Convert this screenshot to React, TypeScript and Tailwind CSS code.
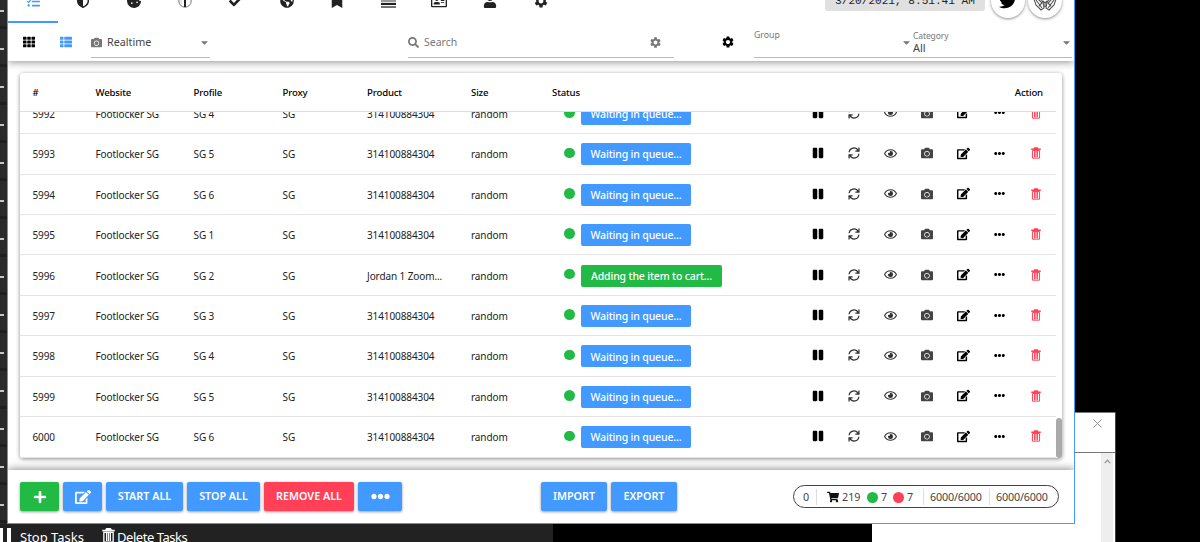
import type { ReactNode } from "react";
import {
  FaBookmark, FaCamera, FaCaretDown, FaCheck, FaCookieBite, FaEdit, FaEllipsisH,
  FaPause, FaPlus, FaRegEye, FaSearch, FaShoppingCart, FaTasks, FaTh, FaThList, FaTwitter, FaUser, FaGlobeAmericas,
  FaRegAddressCard,
} from "react-icons/fa";
import { MdSettings } from "react-icons/md";

const rows = [
  ["5992", "SG 4"], ["5993", "SG 5"], ["5994", "SG 6"], ["5995", "SG 1"], ["5996", "SG 2"],
  ["5997", "SG 3"], ["5998", "SG 4"], ["5999", "SG 5"], ["6000", "SG 6"],
];

const columns =
  "grid grid-cols-[63px_98px_89px_84.5px_104px_81px_1fr] items-center pl-[12.5px] w-[1036px] whitespace-nowrap";

function Trash({ className = "" }: { className?: string }) {
  return (
    <svg viewBox="0 0 14 16" className={className} fill="none" stroke="currentColor">
      <path d="M0.3 2.8H13.7M4.3 2.2L5.2 .8H8.8L9.7 2.2" strokeWidth="2" />
      <path d="M2 4.6V15.2H12V4.6ZM5 5V14M7 5V14M9 5V14" strokeWidth="1.4" />
    </svg>
  );
}

function Sync() {
  return (
    <svg viewBox="0 0 16 16" className="size-[12px] text-[#333]" fill="none" stroke="currentColor" strokeWidth="1.7">
      <path d="M1.5 7A6.3 6.3 0 0 1 13.5 5M14.6 .8V5.6H9.8M14.5 9A6.3 6.3 0 0 1 2.5 11M1.4 15.2V10.4H6.2" />
    </svg>
  );
}

function Row({ id, profile }: { id: string; profile: string }) {
  const carting = id === "5996";
  return (
    <div className={`${columns} h-[40.43px] shrink-0 border-b border-[#e4e4e4] pt-[2px] text-[10px] tracking-[-0.1px] text-[#222]`}>
      <span>{id}</span>
      <span>Footlocker SG</span>
      <span>{profile}</span>
      <span>SG</span>
      <span>{carting ? "Jordan 1 Zoom..." : "314100884304"}</span>
      <span>random</span>
      <div className="flex items-center pb-px pl-3">
        <span className="mb-[3px] mr-[6.5px] size-[10.5px] rounded-full bg-[#21ba45]" />
        <span className={`flex h-[22px] items-center justify-center rounded-[2px] pt-[2px] text-[10.5px] font-medium tracking-[-0.15px] text-white ${carting ? "w-[141px] bg-[#21ba45]" : "w-[110px] bg-[#4299ff]"}`}>
          {carting ? "Adding the item to cart..." : "Waiting in queue..."}
        </span>
        <div className="mb-[2px] ml-auto mr-[2px] grid grid-cols-[repeat(7,36.3px)] place-items-center text-black">
          <FaPause className="size-[12px]" />
          <Sync />
          <FaRegEye className="size-[13px] text-[#333]" />
          <FaCamera className="size-[12px] text-[#444]" />
          <FaEdit className="size-[13px]" />
          <FaEllipsisH className="size-[11px]" />
          <Trash className="h-[12px] w-[10px] text-[#ff4057]" />
        </div>
      </div>
    </div>
  );
}

function Tab({ active, children }: { active?: boolean; children: ReactNode }) {
  return (
    <div className={`flex h-[46px] items-center justify-center border-b-2 pt-[4px] ${active ? "w-[50px] border-[#4299ff] text-[#4299ff]" : "w-[50.8px] border-transparent text-[#222]"}`}>
      {children}
    </div>
  );
}

function Action({ children, className }: { children: ReactNode; className: string }) {
  return (
    <button className={`flex h-[29px] shrink-0 items-center justify-center rounded-[2px] text-[10.75px] font-semibold text-white shadow-[0_1px_3px_rgba(0,0,0,0.4)] ${className}`}>
      {children}
    </button>
  );
}

export default function App() {
  return (
    <div className="relative h-[542px] w-[1200px] overflow-hidden bg-black font-['Noto_Sans',sans-serif]">
      <div className="absolute left-0 top-0 flex h-[542px] w-[553px] bg-[#222]">
        <div className="h-full w-[7px] bg-[#2a2a2a] pt-[10px]">
          {Array.from({ length: 14 }, (_, i) => (
            <div key={i} className="h-[38px]">
              <div className="h-[2px] w-[4px] bg-[#c4c4c4]" />
              <div className="mt-[14px] h-[3px] bg-[#1f1f1f]" />
            </div>
          ))}
        </div>
      </div>
      <div className="absolute left-0 top-[524px] flex h-[22px] w-[553px] items-start bg-[#222] pt-[3px] text-[13px] text-white">
        <div className="mt-px h-5 w-[3px] bg-white" />
        <div className="ml-1 mt-px h-5 w-[4px] bg-white" />
        <span className="ml-[9px] w-[82px] whitespace-nowrap leading-5">Stop Tasks</span>
        <Trash className="mt-px h-[15px] w-[13px]" />
        <span className="ml-[2px] leading-5 tracking-[-0.45px]">Delete Tasks</span>
      </div>

      <div className="absolute left-[872px] top-[412px] flex h-[140px] w-[244px] flex-col border-r border-[#444] bg-white">
        <div className="flex h-[41px] shrink-0 justify-end border-b border-t border-[#777] pr-[13px] pt-[6px]">
          <svg viewBox="0 0 10 10" className="size-[9px]" stroke="#888" strokeWidth="1"><path d="M.5 .5L9.5 9.5M9.5 .5L.5 9.5" /></svg>
        </div>
        <div className="ml-auto mr-[2px] flex h-full w-[12px] justify-center bg-[#eee] pt-[6px]">
          <svg viewBox="0 0 8 6" className="h-[5px] w-[7px]" fill="none" stroke="#999" strokeWidth="1.6"><path d="M.7 5L4 1.5L7.3 5" /></svg>
        </div>
      </div>

      <div className="absolute left-[7px] top-[-24px] flex h-[548px] w-[1068px] flex-col overflow-hidden border border-[#4299ff] bg-white">
        <header className="relative z-10 flex h-[84px] shrink-0 flex-col bg-white shadow-[0_1px_8px_rgba(0,0,0,0.45)]">
          <div className="flex h-[46px] shrink-0">
            <Tab active><FaTasks className="size-[13px]" /></Tab>
            <Tab>
              <svg viewBox="0 0 14 14" className="size-[14px]"><path d="M7 .8L12.3 2.6V7C12.3 10 9.8 12 7 13.2C4.2 12 1.7 10 1.7 7V2.6Z" fill="none" stroke="currentColor" strokeWidth="1.5" /><path d="M7 1V13C4 12 1.7 10 1.7 7V2.6Z" fill="currentColor" /></svg>
            </Tab>
            <Tab><FaCookieBite className="size-[14px]" /></Tab>
            <Tab>
              <svg viewBox="0 0 14 14" className="size-[14px]"><circle cx="7" cy="7" r="6.2" fill="none" stroke="#777" strokeWidth="1" /><path d="M6 1H8V13H6Z" fill="currentColor" /><path d="M3 3V10" stroke="#ccc" /></svg>
            </Tab>
            <Tab><FaCheck className="size-[13px]" /></Tab>
            <Tab><FaGlobeAmericas className="size-[14px]" /></Tab>
            <Tab><FaBookmark className="size-[14px]" /></Tab>
            <Tab>
              <svg viewBox="0 0 14 14" className="size-[15px]"><path d="M0 1H14V7.5H0Z" fill="#999" /><path d="M0 8.3H14V10.3H0Z" fill="currentColor" /><path d="M0 11.3H14V13H0Z" fill="#666" /></svg>
            </Tab>
            <Tab><FaRegAddressCard className="size-[16px]" /></Tab>
            <Tab><FaUser className="size-[14px]" /></Tab>
            <Tab><MdSettings className="size-[16px]" /></Tab>
            <div className="ml-auto flex items-center gap-[3px] pr-[12px] pt-px">
              <div className="flex h-[20px] w-[160px] items-center justify-center whitespace-nowrap rounded-[3px] bg-[#e0e0e0] pt-px font-['Liberation_Mono',monospace] text-[11.1px] text-[#222]">3/20/2021, 8:51:41 AM</div>
              <div className="ml-[3px] flex size-[34px] items-center justify-center rounded-full shadow-[0_1px_3px_rgba(0,0,0,0.45)]"><FaTwitter className="size-[18px]" /></div>
              <div className="flex size-[34px] items-center justify-center rounded-full shadow-[0_1px_3px_rgba(0,0,0,0.45)]">
                <svg viewBox="0 0 24 20" className="h-[20px] w-[24px]" fill="none" stroke="#555" strokeWidth="1.1">
                  <path d="M1 8L5 5L10 11L11 17L8 19L3 14ZM23 8L19 5L14 11L13 17L16 19L21 14ZM3 9L9 17M21 9L15 17M10 10L12 12L14 10M5 8L9 12L6 15M19 8L15 12L18 15M12 12V16" />
                </svg>
              </div>
            </div>
          </div>
          <div className="flex h-[38px] items-start whitespace-nowrap text-[#444]">
            <div className="flex h-[34px] w-[83px] items-center gap-[25px] pl-[14.5px] pt-[3px]">
              <FaTh className="size-[12px] text-black" />
              <FaThList className="size-[12px] text-[#4299ff]" />
            </div>
            <div className="flex h-[35px] w-[119px] items-center border-b border-[#bbb] pt-[4px] text-[10.75px]">
              <FaCamera className="mr-[5px] size-[11px] text-[#777]" />Realtime
              <FaCaretDown className="ml-auto size-[11px] text-[#777]" />
            </div>
            <div className="ml-[198px] flex h-[35px] w-[266px] items-center border-b border-[#bbb] pr-[12px] pt-[5px] text-[10.5px] text-[#777]">
              <FaSearch className="mr-[5px] size-[11px]" />Search
              <MdSettings className="ml-auto size-[13px]" />
            </div>
            <div className="flex h-[35px] w-[80px] items-center pl-[47px] pt-[3px] text-black"><MdSettings className="size-[14px]" /></div>
            <div className="flex h-[35px] w-[318px] border-b border-[#bbb]">
              <div className="flex w-[158px] items-center pt-[4px]">
                <span className="mb-[12px] text-[8.75px] text-[#777]">Group</span>
                <FaCaretDown className="ml-auto size-[11px] text-[#777]" />
              </div>
              <div className="flex flex-1 items-center pl-px">
                <div className="flex flex-col pt-[3px]">
                  <span className="text-[8.5px] leading-[12px] tracking-[-0.1px] text-[#777]">Category</span>
                  <span className="text-[11px] leading-[12px]">All</span>
                </div>
                <FaCaretDown className="ml-auto mt-[4px] size-[11px] text-[#777]" />
              </div>
            </div>
          </div>
        </header>

        <main className="flex h-[409px] shrink-0 px-[12px] pt-[12px]">
          <section className="flex h-[385px] w-[1042px] flex-col rounded-[3px] bg-white shadow-[0_1px_4px_rgba(0,0,0,0.45)]">
            <div className={`${columns} h-[39px] shrink-0 border-b border-[#ddd] pt-[3px] text-[9.6px] font-medium tracking-[-0.15px] text-black`}>
              <span>#</span><span>Website</span><span>Profile</span><span>Proxy</span><span>Product</span><span>Size</span>
              <div className="flex justify-between pr-[13px]"><span>Status</span><span>Action</span></div>
            </div>
            <div className="flex h-[345.5px] shrink-0 items-end overflow-hidden">
              <div className="flex flex-col">
                {rows.map(([id, profile]) => <Row key={id} id={id} profile={profile} />)}
              </div>
              <div className="h-[40px] w-[6px] rounded-[3px] bg-[#aaa]" />
            </div>
          </section>
        </main>

        <footer className="relative z-10 flex h-[53px] shrink-0 items-center bg-white pl-[12px] shadow-[0_-1px_8px_rgba(0,0,0,0.45)]">
          <div className="flex w-[521px] gap-[4px]">
            <Action className="w-[39px] bg-[#21ba45]"><FaPlus className="size-[14px]" /></Action>
            <Action className="w-[39px] bg-[#4299ff]"><FaEdit className="size-[16px]" /></Action>
            <Action className="w-[77px] bg-[#4299ff]">START ALL</Action>
            <Action className="w-[73px] bg-[#4299ff]">STOP ALL</Action>
            <Action className="w-[90px] bg-[#ff4057]">REMOVE ALL</Action>
            <Action className="w-[44px] bg-[#4299ff]"><FaEllipsisH className="size-[19px]" /></Action>
          </div>
          <Action className="mr-[4px] w-[66px] bg-[#4299ff]">IMPORT</Action>
          <Action className="w-[66px] bg-[#4299ff]">EXPORT</Action>
          <div className="ml-[116px] flex h-[23px] w-[266px] items-center whitespace-nowrap rounded-full border border-[#444] pt-px text-[10.75px] text-[#444]">
            <span className="w-[23px] border-r border-[#ddd] pl-[9px]">0</span>
            <div className="flex w-[107px] items-center border-r border-[#ddd] pl-[10px]">
              <FaShoppingCart className="mr-[3px] size-[12px] text-[#111]" /><span className="w-[25px]">219</span>
              <span className="mr-[3px] size-[11px] rounded-full bg-[#21ba45]" /><span className="w-[12px]">7</span>
              <span className="mr-[3px] size-[11px] rounded-full bg-[#ff4057]" />7
            </div>
            <span className="w-[66px] border-r border-[#ddd] pl-[6px] tracking-[-0.15px]">6000/6000</span>
            <span className="pl-[6px] tracking-[-0.15px]">6000/6000</span>
          </div>
        </footer>
      </div>
    </div>
  );
}
